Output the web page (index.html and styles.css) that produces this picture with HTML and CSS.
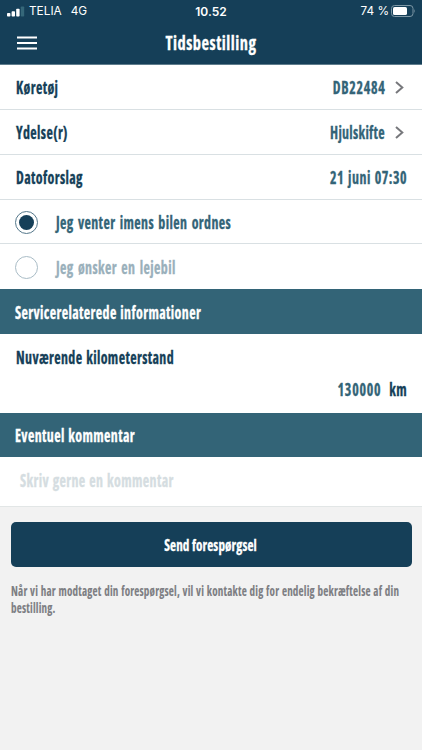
FILE: index.html
```html
<!DOCTYPE html>
<html lang="da">

<head>
    <meta charset="UTF-8">
    <meta name="viewport" content="width=device-width, initial-scale=1.0">
    <title>Tidsbestilling</title>
    <link rel="stylesheet" href="styles.css">
</head>

<body>
    <header class="header">
        <div class="status-bar">
            <div class="status-left">
                <svg class="signal" width="18" height="11" viewBox="0 0 18 11">
                    <rect x="0" y="7" width="3.4" height="3.6" rx="0.8" fill="#fff" />
                    <rect x="4.6" y="5.2" width="3.4" height="5.4" rx="0.8" fill="#fff" />
                    <rect x="9.2" y="2.8" width="3.4" height="7.8" rx="0.8" fill="#fff" />
                    <rect x="13.8" y="0.4" width="3.4" height="10.2" rx="0.8" fill="#356779" />
                </svg>
                <span class="carrier">TELIA</span>
                <span>4G</span>
            </div>
            <span class="clock">10.52</span>
            <div class="status-right">
                <span>74 %</span>
                <svg class="battery" width="26" height="12" viewBox="0 0 26 12">
                    <rect x="0.5" y="0.5" width="21.5" height="11" rx="3" fill="none" stroke="#7d97a5" />
                    <rect x="2" y="2" width="14" height="8" rx="1.6" fill="#fff" />
                    <path d="M23.3 4 Q24.8 6 23.3 8 Z" fill="#7d97a5" />
                </svg>
            </div>
        </div>
        <div class="nav-bar">
            <svg class="menu-icon" width="20" height="14" viewBox="0 0 20 14">
                <path d="M0 1.5H20M0 7H20M0 12.5H20" stroke="#fff" stroke-width="1.8" />
            </svg>
            <h1 class="title narrow">Tidsbestilling</h1>
        </div>
    </header>

    <main>
        <div class="row">
            <span class="label narrow">Køretøj</span>
            <span class="value number narrow">DB22484</span>
            <svg class="chevron" width="9" height="13" viewBox="0 0 9 13">
                <path d="M1 1L7.3 6.5L1 12" fill="none" stroke="#77787c" stroke-width="2" />
            </svg>
        </div>
        <div class="row">
            <span class="label narrow">Ydelse(r)</span>
            <span class="value narrow">Hjulskifte</span>
            <svg class="chevron" width="9" height="13" viewBox="0 0 9 13">
                <path d="M1 1L7.3 6.5L1 12" fill="none" stroke="#77787c" stroke-width="2" />
            </svg>
        </div>
        <div class="row">
            <span class="label narrow">Datoforslag</span>
            <span class="value date narrow">21 juni 07:30</span>
        </div>
        <div class="row">
            <span class="radio checked"></span>
            <span class="option narrow">Jeg venter imens bilen ordnes</span>
        </div>
        <div class="row last">
            <span class="radio"></span>
            <span class="option muted narrow">Jeg ønsker en lejebil</span>
        </div>

        <h2 class="section"><span class="narrow">Servicerelaterede informationer</span></h2>
        <div class="mileage">
            <div class="mileage-label"><span class="label narrow">Nuværende kilometerstand</span></div>
            <div class="mileage-value">
                <span class="value number narrow">130000</span>
                <span class="unit narrow">km</span>
            </div>
        </div>

        <h2 class="section"><span class="narrow">Eventuel kommentar</span></h2>
        <div class="comment"><span class="placeholder narrow">Skriv gerne en kommentar</span></div>
    </main>

    <button class="send-button"><span class="narrow">Send forespørgsel</span></button>
    <div class="note">
        <p class="note-text narrow">Når vi har modtaget din forespørgsel, vil vi kontakte dig for endelig bekræftelse af din bestilling.</p>
    </div>
</body>

</html>
```
FILE: styles.css
```css
:root {
    --navy: #153f58;
    --teal: #336477;
    --line: #d9e0e3;
    --row-height: 44.8px;
}

* {
    box-sizing: border-box;
}

body {
    margin: 0;
    min-height: 100vh;
    background-color: #f2f2f2;
    color: var(--navy);
    font-family: "Open Sans", sans-serif;
    font-stretch: 75%;
    font-size: 17px;
    font-weight: bold;
}

/* squeezes the bold text to the width of a compressed face */
.narrow {
    display: inline-block;
    white-space: nowrap;
    letter-spacing: 0.46px;
    word-spacing: 1px;
    transform: scaleX(0.82);
    transform-origin: left center;
    -webkit-text-stroke: 0.3px;
}

.header {
    height: 65.3px;
    background-color: var(--navy);
    color: #fff;
    border-bottom: 1px solid #5f7d8d;
}

.status-bar {
    display: grid;
    grid-template-columns: 1fr auto 1fr;
    align-items: center;
    height: 22px;
    padding: 0 6px 0 7px;
    font-family: Inter, sans-serif;
    font-stretch: normal;
    font-size: 11.8px;
    font-weight: normal;
}

.status-left,
.status-right {
    display: flex;
    align-items: center;
}

.status-right {
    justify-content: flex-end;
    gap: 2px;
}

.battery {
    margin-right: -1px;
}

.carrier {
    margin: 0 9px 0 4px;
}

.clock {
    margin-right: 1px;
    font-size: 12px;
    font-weight: 600;
}

.nav-bar {
    display: grid;
    grid-template-columns: 20px 1fr 20px;
    align-items: center;
    height: 41px;
    padding: 0 17px;
}

.title {
    margin: -1px 0 0;
    font-size: 20px;
    letter-spacing: 0.6px;
    text-align: center;
    transform-origin: center;
}

.row {
    display: flex;
    align-items: center;
    height: var(--row-height);
    padding: 1px 15px 0;
    background-color: #fff;
    border-bottom: 1px solid var(--line);
}

.row.last {
    border-bottom: none;
}

.label {
    margin-left: 0.5px;
}

.value {
    margin-left: auto;
    color: var(--teal);
    letter-spacing: 0.35px;
    transform-origin: right center;
}

.value.number {
    margin-right: -0.5px;
    letter-spacing: 0.9px;
}

.value.date {
    margin-right: -0.5px;
    letter-spacing: 0.65px;
}

.chevron {
    margin: 0 3px 0 10px;
}

.radio {
    display: flex;
    align-items: center;
    justify-content: center;
    width: 23px;
    height: 23px;
    border: 1px solid #a9bcc6;
    border-radius: 50%;
}

.radio.checked {
    border-color: #55788b;
}

.radio.checked::after {
    content: "";
    width: 15px;
    height: 15px;
    border-radius: 50%;
    background-color: var(--navy);
}

.option {
    margin-left: 18px;
    color: var(--teal);
    word-spacing: 1.8px;
}

.option.muted {
    color: #9ab0bb;
}

.section {
    display: flex;
    align-items: center;
    height: var(--row-height);
    margin: 0;
    padding: 1px 15px 0;
    background-color: var(--teal);
    color: #fff;
    font-size: 17px;
}

.mileage {
    height: 78.6px;
    padding: 0 15px;
    background-color: #fff;
}

.mileage-label {
    display: flex;
    align-items: center;
    height: 46px;
}

.mileage-value {
    display: flex;
    align-items: center;
    height: 18px;
}

.unit {
    display: flex;
    justify-content: flex-end;
    width: 26px;
    transform-origin: right center;
}

.comment {
    display: flex;
    align-items: center;
    height: 49.5px;
    padding: 0 19.5px 2px;
    background-color: #fff;
    border-bottom: 1px solid #e2e6e6;
}

.placeholder {
    color: #d5dde1;
}

.send-button {
    display: flex;
    align-items: center;
    justify-content: center;
    width: 401px;
    height: 45px;
    margin: 15.5px 10.5px 0;
    padding: 0;
    border: none;
    border-radius: 5px;
    background-color: var(--navy);
    color: #fff;
    font: inherit;
    font-stretch: 75%;
    font-size: 16px;
}

.send-button .narrow {
    letter-spacing: 0.15px;
    word-spacing: 0;
    transform-origin: center;
}

.note {
    overflow: hidden;
    padding: 16px 0 4px 10.5px;
}

/* wider than the screen before it is squeezed */
.note-text {
    width: 490px;
    margin: 0;
    color: #7d7e83;
    font-size: 13.5px;
    line-height: 16.5px;
    letter-spacing: 0.23px;
    word-spacing: 0.6px;
    white-space: normal;
    -webkit-text-stroke: 0.1px;
}
```
